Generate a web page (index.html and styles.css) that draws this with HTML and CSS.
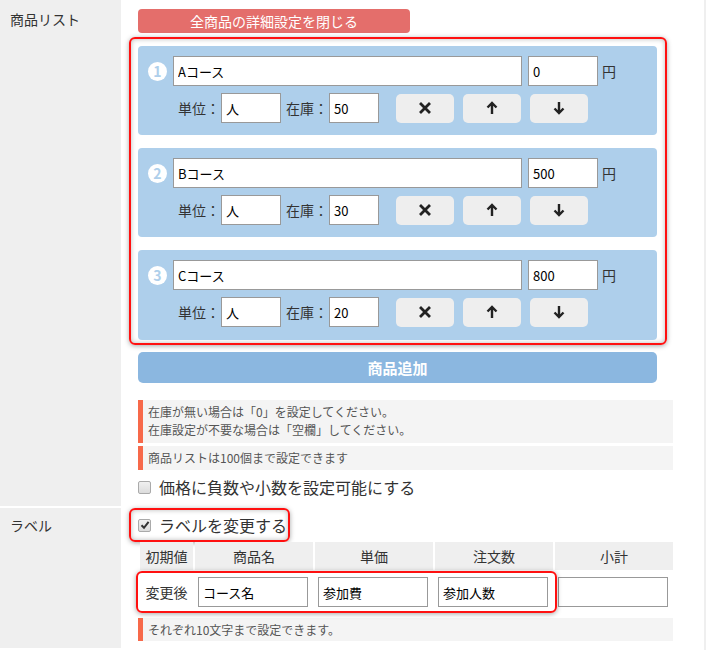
FILE: index.html
```html
<!DOCTYPE html>
<html lang="ja">
<head>
<meta charset="utf-8">
<link rel="stylesheet" href="styles.css">
</head>
<body>
<div class="form">
  <div class="row row-items">
    <div class="label">商品リスト</div>
    <div class="field">
      <button class="close-btn">全商品の詳細設定を閉じる</button>
      <div class="hl hl-items">
        <div class="item">
          <div class="item-line">
            <span class="num">1</span>
            <input class="in-name" value="Aコース">
            <input class="in-price" value="0">
            <span class="yen">円</span>
          </div>
          <div class="item-line sub">
            <span class="lbl">単位：</span><input class="in-unit" value="人">
            <span class="lbl lbl2">在庫：</span><input class="in-stock" value="50">
            <button class="ibtn"><svg width="12" height="12" viewBox="0 0 12 12"><path d="M2 2L10 10M10 2L2 10" stroke="#222" stroke-width="2.8" stroke-linecap="square"/></svg></button>
            <button class="ibtn"><svg width="12" height="14" viewBox="0 0 12 14"><path d="M6 13V2M1.5 6.5L6 2L10.5 6.5" fill="none" stroke="#222" stroke-width="2.4"/></svg></button>
            <button class="ibtn"><svg width="12" height="14" viewBox="0 0 12 14"><path d="M6 1V12M1.5 7.5L6 12L10.5 7.5" fill="none" stroke="#222" stroke-width="2.4"/></svg></button>
          </div>
        </div>
        <div class="item">
          <div class="item-line">
            <span class="num">2</span>
            <input class="in-name" value="Bコース">
            <input class="in-price" value="500">
            <span class="yen">円</span>
          </div>
          <div class="item-line sub">
            <span class="lbl">単位：</span><input class="in-unit" value="人">
            <span class="lbl lbl2">在庫：</span><input class="in-stock" value="30">
            <button class="ibtn"><svg width="12" height="12" viewBox="0 0 12 12"><path d="M2 2L10 10M10 2L2 10" stroke="#222" stroke-width="2.8" stroke-linecap="square"/></svg></button>
            <button class="ibtn"><svg width="12" height="14" viewBox="0 0 12 14"><path d="M6 13V2M1.5 6.5L6 2L10.5 6.5" fill="none" stroke="#222" stroke-width="2.4"/></svg></button>
            <button class="ibtn"><svg width="12" height="14" viewBox="0 0 12 14"><path d="M6 1V12M1.5 7.5L6 12L10.5 7.5" fill="none" stroke="#222" stroke-width="2.4"/></svg></button>
          </div>
        </div>
        <div class="item">
          <div class="item-line">
            <span class="num">3</span>
            <input class="in-name" value="Cコース">
            <input class="in-price" value="800">
            <span class="yen">円</span>
          </div>
          <div class="item-line sub">
            <span class="lbl">単位：</span><input class="in-unit" value="人">
            <span class="lbl lbl2">在庫：</span><input class="in-stock" value="20">
            <button class="ibtn"><svg width="12" height="12" viewBox="0 0 12 12"><path d="M2 2L10 10M10 2L2 10" stroke="#222" stroke-width="2.8" stroke-linecap="square"/></svg></button>
            <button class="ibtn"><svg width="12" height="14" viewBox="0 0 12 14"><path d="M6 13V2M1.5 6.5L6 2L10.5 6.5" fill="none" stroke="#222" stroke-width="2.4"/></svg></button>
            <button class="ibtn"><svg width="12" height="14" viewBox="0 0 12 14"><path d="M6 1V12M1.5 7.5L6 12L10.5 7.5" fill="none" stroke="#222" stroke-width="2.4"/></svg></button>
          </div>
        </div>
      </div>
      <button class="add-btn">商品追加</button>
      <div class="note note-first">在庫が無い場合は「0」を設定してください。<br>在庫設定が不要な場合は「空欄」してください。</div>
      <div class="note">商品リストは100個まで設定できます</div>
      <div class="check check-price"><span class="cbox"></span><span>価格に負数や小数を設定可能にする</span></div>
    </div>
  </div>
  <div class="row row-label">
    <div class="label label-2">ラベル</div>
    <div class="field field-2">
      <div class="hl hl-check"><span class="cbox checked"><svg width="10" height="10" viewBox="0 0 10 10"><path d="M1.5 5.2L4 7.8L8.6 1.8" fill="none" stroke="#333" stroke-width="2"/></svg></span><span>ラベルを変更する</span></div>
      <div class="ltable">
        <div class="th">初期値</div>
        <div class="th">商品名</div>
        <div class="th">単価</div>
        <div class="th">注文数</div>
        <div class="th">小計</div>
        <div class="td td-lbl">変更後</div>
        <div class="td"><input class="in-lab" value="コース名"></div>
        <div class="td"><input class="in-lab" value="参加費"></div>
        <div class="td"><input class="in-lab" value="参加人数"></div>
        <div class="td"><input class="in-lab" value=""></div>
        <div class="hl hl-row"></div>
      </div>
      <div class="note note-last">それぞれ10文字まで設定できます。</div>
    </div>
  </div>
</div>
</body>
</html>
```
FILE: styles.css
```css
* { box-sizing: border-box; }
body {
  margin: 0;
  font-family: "Noto Sans CJK JP", "Noto Sans", sans-serif;
  color: #333;
  background: #fff;
}
.form {
  width: 706px;
  border-right: 2px solid #efefef;
  height: 650px;
  overflow: hidden;
}
.row {
  display: grid;
  grid-template-columns: 121px 1fr;
}
.row-items {
  height: 508px;
  border-bottom: 2px solid #fff;
}
.row-label { height: 140px; }
.label {
  background: #efefef;
  font-size: 14px;
  line-height: 20px;
  padding: 9px 0 0 10px;
}
.label-2 { padding-top: 7px; }
.field {
  padding: 9px 0 0 17px;
  background: #fff;
}
.field-2 { padding-top: 0; }

.close-btn {
  display: block;
  width: 272px;
  height: 24px;
  border: none;
  border-radius: 4px;
  background: #e46e6b;
  color: #fff;
  font-family: inherit;
  font-size: 14px;
  padding: 0;
  line-height: 24px;
}

.hl {
  border: 2px solid #ff1010;
  border-radius: 6px;
  box-shadow: 0 1px 5px rgba(0,0,0,.35), inset 0 0 5px rgba(0,0,0,.28);
}
.hl-items {
  margin: 4px 0 0 -9px;
  width: 538px;
  padding: 7px 8px 3px 7px;
}
.item {
  background: #aecfeb;
  border-radius: 4px;
  padding: 10px 0 12px 10px;
  height: 89px;
  margin-bottom: 13px;
}
.item:last-child { margin-bottom: 0; height: 90px; }
.item-line {
  display: flex;
  align-items: center;
  height: 30px;
}
.item-line.sub {
  margin-top: 7px;
  padding-left: 30px;
}
.num {
  width: 19px;
  height: 19px;
  border-radius: 50%;
  background: #fff;
  color: #aecfeb;
  font-weight: bold;
  font-size: 14px;
  line-height: 19px;
  text-align: center;
  margin-right: 6px;
}
input {
  height: 30px;
  border: 1px solid #999;
  background: #fff;
  font-family: "Noto Sans CJK JP", sans-serif;
  font-size: 13px;
  color: #000;
  padding: 0 4px;
  margin: 0;
  outline: none;
}
.in-name { width: 349px; margin-right: 6px; }
.in-price { width: 70px; }
.yen { font-size: 14px; margin-left: 4px; color: #333; }
.lbl { font-size: 14px; width: 43px; color: #333; }
.lbl2 { margin-left: 5px; }
.in-unit { width: 60px; }
.in-stock { width: 50px; margin-right: 17px; }
.ibtn {
  width: 58px;
  height: 29px;
  border: none;
  border-radius: 5px;
  background: #eeeeee;
  margin-right: 9px;
  padding: 0;
  display: flex;
  align-items: center;
  justify-content: center;
}

.add-btn {
  display: block;
  margin-top: 7px;
  width: 519px;
  height: 31px;
  border: none;
  border-radius: 5px;
  background: #8bb7e0;
  color: #fff;
  font-family: inherit;
  font-weight: bold;
  font-size: 15px;
  padding: 0;
}

.note {
  width: 535px;
  background: #f4f4f4;
  border-left: 5px solid #f7694a;
  font-size: 12px;
  line-height: 18px;
  color: #555;
  padding: 3px 5px;
  margin-top: 3px;
}
.note-first { margin-top: 17px; padding-bottom: 4px; }
.note-last { margin-top: 6px; height: 23px; padding-top: 3px; }

.check {
  display: flex;
  align-items: center;
  font-size: 16px;
  line-height: 20px;
  color: #333;
}
.check-price { margin-top: 7px; }
.cbox {
  width: 13px;
  height: 13px;
  border: 1px solid #aaa;
  border-radius: 2px;
  background: linear-gradient(#f0f0f0, #dcdcdc);
  margin-right: 8px;
  display: flex;
  align-items: center;
  justify-content: center;
}
.hl-check {
  display: inline-flex;
  align-items: center;
  margin-left: -9px;
  height: 34px;
  padding: 0 1px 0 7px;
  font-size: 16px;
  color: #333;
}

.ltable {
  position: relative;
  display: grid;
  grid-template-columns: 53px 118px 118px 118px 118px;
  grid-template-rows: 28px 40px;
  gap: 2px;
  margin-left: 2px;
}
.th {
  background: #efefef;
  font-size: 14px;
  line-height: 28px;
  text-align: center;
  color: #333;
}
.td {
  padding: 5px 0 0 3px;
}
.td-lbl {
  font-size: 14px;
  line-height: 30px;
  text-align: center;
  padding: 5px 0 0 0;
}
.in-lab { width: 110px; }
.hl-row {
  position: absolute;
  left: -4px;
  top: 29px;
  width: 421px;
  height: 42px;
  box-shadow: 0 1px 5px rgba(0,0,0,.35);
}
```
